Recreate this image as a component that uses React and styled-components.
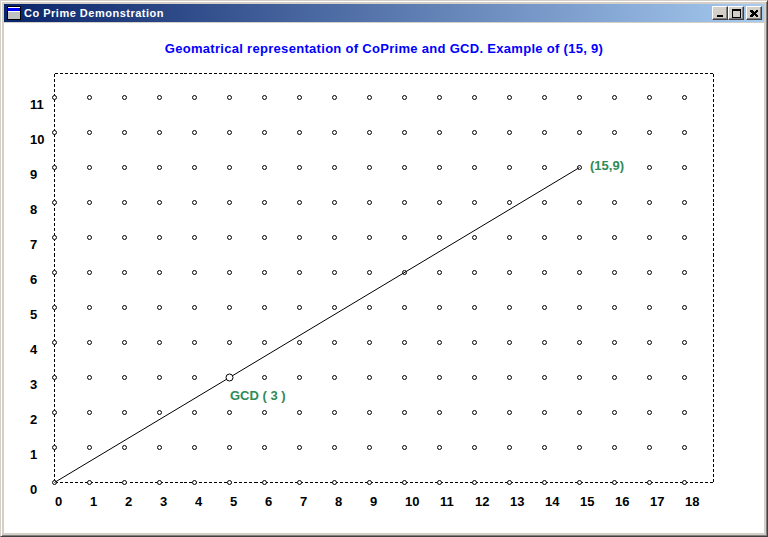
import React from 'react';
import styled, { createGlobalStyle } from 'styled-components';

const GlobalStyle = createGlobalStyle`
  html, body {
    margin: 0;
    padding: 0;
    background: #d4d0c8;
  }
  * {
    box-sizing: border-box;
  }
`;

// chart geometry (svg coords, svg sits at page 4,60)
const STEP = 35;
const OX = 50;
const OY = 422;
const COLS = 18;
const ROWS = 11;
const A = 15;
const B = 9;
const G = 3;

const px = (i) => OX + i * STEP + 0.5;
const py = (j) => OY - j * STEP + 0.5;

const Window = styled.div`
  width: 768px;
  height: 537px;
  display: flex;
  flex-direction: column;
  background: #d4d0c8;
  border-top: 1px solid #d4d0c8;
  border-left: 1px solid #d4d0c8;
  border-right: 1px solid #404040;
  border-bottom: 1px solid #404040;
  box-shadow: inset 1px 1px 0 #ffffff, inset -1px -1px 0 #808080;
  padding: 3px;
`;

const TitleBar = styled.div`
  height: 18px;
  display: flex;
  align-items: center;
  padding: 0 2px 0 2px;
  background: linear-gradient(to right, #0a246a, #a6caf0);
  flex-shrink: 0;
`;

const TitleText = styled.span`
  font-family: "Liberation Sans", Arial, sans-serif;
  font-size: 11px;
  font-weight: bold;
  color: #ffffff;
  margin-left: 2px;
  letter-spacing: 0.5px;
  flex: 1;
  white-space: nowrap;
`;

const Controls = styled.div`
  display: flex;
  align-items: center;
`;

const CtrlButton = styled.div`
  width: 16px;
  height: 14px;
  margin-left: ${(p) => (p.$gap ? '2px' : '0')};
  background: #d4d0c8;
  border-top: 1px solid #ffffff;
  border-left: 1px solid #ffffff;
  border-right: 1px solid #404040;
  border-bottom: 1px solid #404040;
  box-shadow: inset -1px -1px 0 #808080;
  display: flex;
  align-items: center;
  justify-content: center;
`;

const Client = styled.div`
  margin-top: 1px;
  height: 510px;
  background: #ffffff;
  display: flex;
  flex-direction: column;
`;

const Heading = styled.div`
  padding-top: 18px;
  height: 33px;
  line-height: 15px;
  text-align: center;
  font-family: "Liberation Sans", Arial, sans-serif;
  font-size: 13px;
  letter-spacing: 0.3px;
  font-weight: bold;
  color: #0000ff;
`;

const Chart = styled.svg`
  display: block;
  margin-top: 4px;
  font-family: "Liberation Sans", Arial, sans-serif;
  font-size: 13px;
  font-weight: bold;
`;

const AppIcon = () => (
  <svg width="16" height="16" viewBox="0 0 16 16" shapeRendering="crispEdges">
    <rect x="1.5" y="1.5" width="13" height="13" fill="#c0c0c0" stroke="#000" />
    <rect x="2" y="2" width="12" height="1" fill="#ffffff" />
    <rect x="2" y="3" width="12" height="3" fill="#0000ff" />
    <rect x="2" y="6" width="12" height="1" fill="#ffffff" />
  </svg>
);

const MinIcon = () => (
  <svg width="8" height="7" viewBox="0 0 8 7" shapeRendering="crispEdges">
    <rect x="1" y="5" width="6" height="2" fill="#000" />
  </svg>
);

const MaxIcon = () => (
  <svg width="9" height="9" viewBox="0 0 9 9" shapeRendering="crispEdges">
    <rect x="0.5" y="0.5" width="8" height="8" fill="none" stroke="#000" />
    <rect x="0" y="1" width="9" height="1" fill="#000" />
  </svg>
);

const CloseIcon = () => (
  <svg width="8" height="7" viewBox="0 0 8 7" shapeRendering="crispEdges">
    <path d="M0 0h2l2 2 2-2h2v1L6 3.5 8 6v1H6L4 5 2 7H0V6l2-2.5L0 1z" fill="#000" />
  </svg>
);

const dots = [];
for (let j = 0; j <= ROWS; j++) {
  for (let i = 0; i <= COLS; i++) {
    dots.push({ i, j });
  }
}

const xs = Array.from({ length: COLS + 1 }, (_, i) => i);
const ys = Array.from({ length: ROWS + 1 }, (_, j) => j);

export default function App() {
  const gi = A / G;
  const gj = B / G;

  return (
    <>
      <GlobalStyle />
      <Window>
        <TitleBar>
          <AppIcon />
          <TitleText>Co Prime Demonstration</TitleText>
          <Controls>
            <CtrlButton><MinIcon /></CtrlButton>
            <CtrlButton><MaxIcon /></CtrlButton>
            <CtrlButton $gap><CloseIcon /></CtrlButton>
          </Controls>
        </TitleBar>
        <Client>
          <Heading>Geomatrical representation of CoPrime and GCD. Example of (15, 9)</Heading>
          <Chart width="760" height="450" viewBox="0 0 760 450">
            {/* frame */}
            <g stroke="#000" strokeWidth="1" strokeDasharray="3 2" shapeRendering="crispEdges" fill="none">
              <line x1={OX + 0.5} y1={13.5} x2={709.5} y2={13.5} />
              <line x1={OX + 0.5} y1={13.5} x2={OX + 0.5} y2={OY + 0.5} />
              <line x1={709.5} y1={13.5} x2={709.5} y2={OY + 0.5} />
              <line x1={OX + 0.5} y1={OY + 0.5} x2={709.5} y2={OY + 0.5} />
            </g>

            {/* lattice */}
            <g stroke="#000" strokeWidth="1" fill="#fff">
              {dots.map(({ i, j }) => (
                <circle key={`${i}-${j}`} cx={px(i)} cy={py(j)} r="2" />
              ))}
            </g>

            <line x1={px(0)} y1={py(0)} x2={px(A)} y2={py(B)} stroke="#000" strokeWidth="1" />
            <circle cx={px(gi)} cy={py(gj)} r="3.5" stroke="#000" strokeWidth="1" fill="#fff" />

            {/* axis labels */}
            <g fill="#000">
              {xs.map((i) => (
                <text key={`x${i}`} x={OX + i * STEP + 1} y={OY + 24}>{i}</text>
              ))}
              {ys.map((j) => (
                <text key={`y${j}`} x={26} y={OY - j * STEP + 12}>{j}</text>
              ))}
            </g>

            {/* point labels, drawn opaque like the original */}
            <rect x={584} y={97} width={42} height={16} fill="#fff" />
            <g fill="#2e8b57">
              <text x={586} y={110}>({A},{B})</text>
              <text x={226} y={340}>GCD ( {G} )</text>
            </g>
          </Chart>
        </Client>
      </Window>
    </>
  );
}
